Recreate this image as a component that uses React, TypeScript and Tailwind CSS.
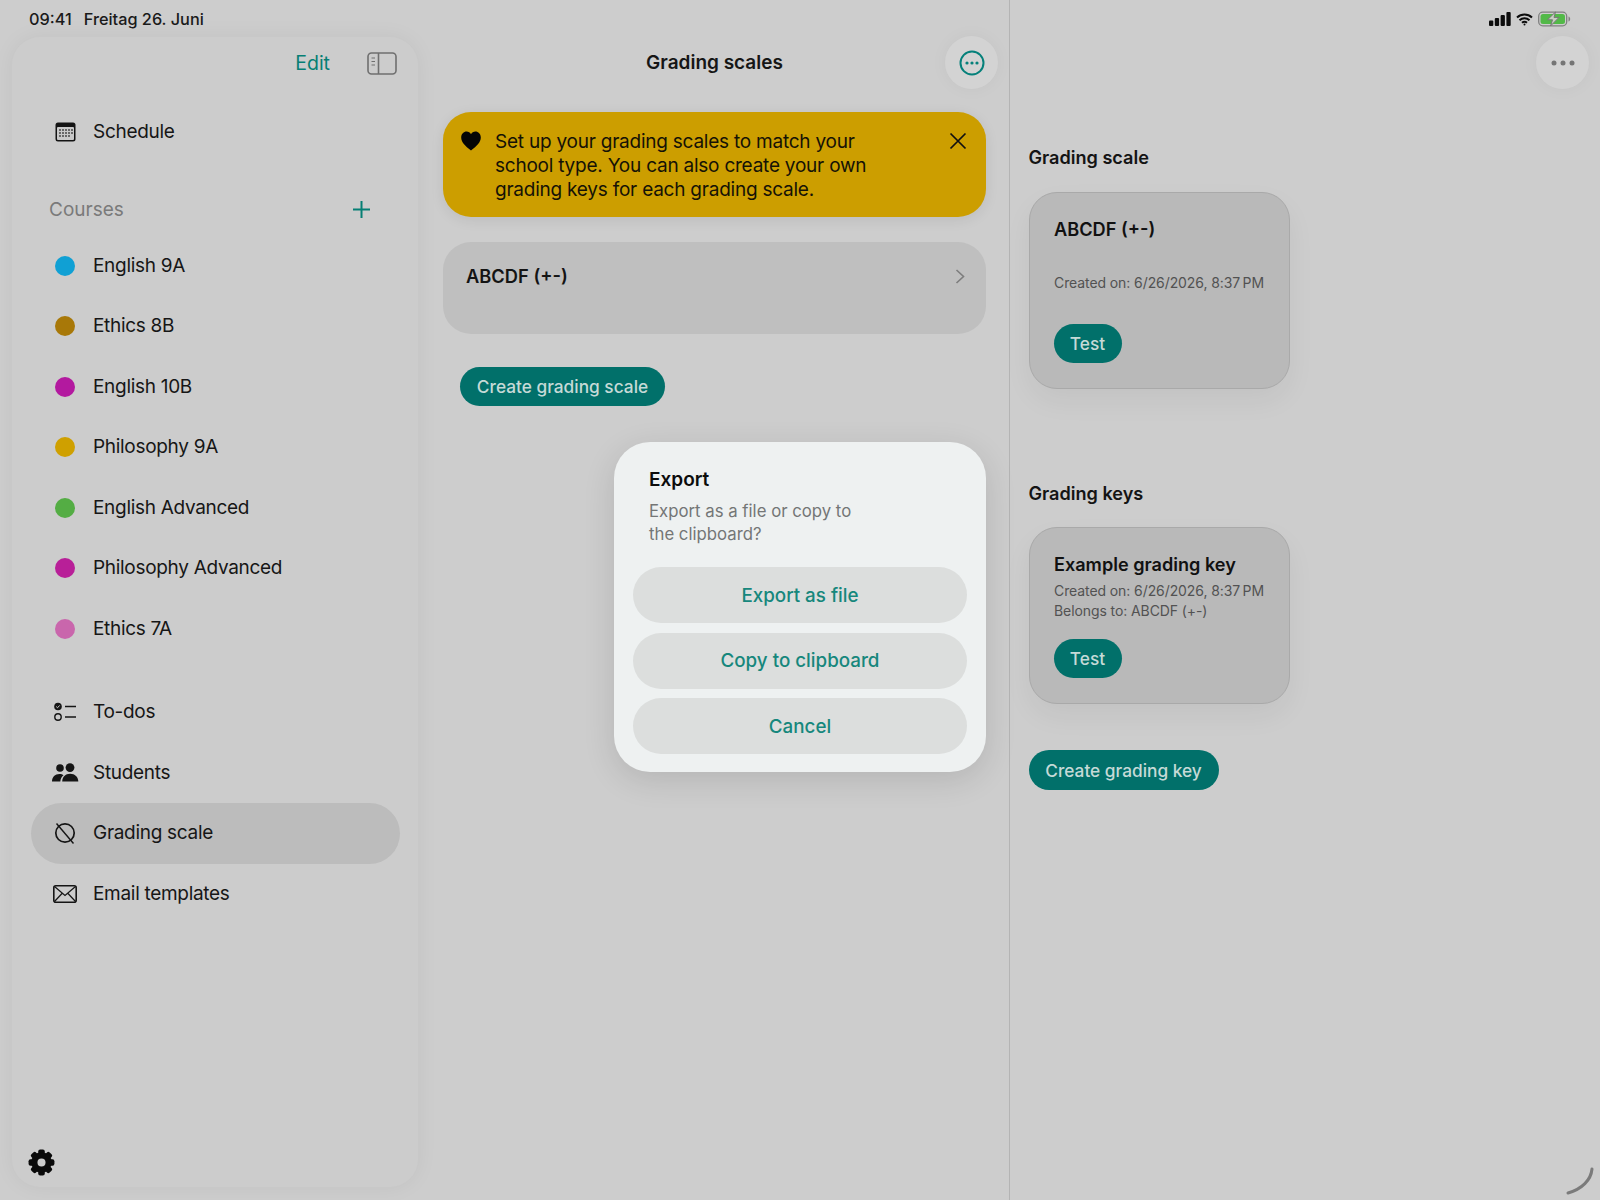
import React from "react";

const font = { fontFamily: '"Inter", "Liberation Sans", sans-serif' };

function CalendarIcon() {
  return (
    <svg width="21" height="20" viewBox="0 0 21 20">
      <rect x="0.5" y="0.5" width="20" height="19" rx="2.5" fill="#141414" />
      <rect x="2" y="5" width="17" height="13" rx="1" fill="#c9c9c9" />
      {[8, 11, 14].map((y) =>
        [5, 8, 11, 14, 17].map((x) => (y === 14 && x === 17 ? null : <rect key={`${x}-${y}`} x={x - 0.8} y={y - 0.8} width="1.6" height="1.6" fill="#333" />))
      )}
    </svg>
  );
}
function TodoIcon() {
  return (
    <svg width="24" height="20" viewBox="0 0 24 20" fill="none">
      <circle cx="5" cy="4.5" r="3.8" fill="#151515" />
      <path d="M3.2 4.5l1.3 1.3 2.2-2.4" stroke="#ccc" strokeWidth="1" />
      <circle cx="5" cy="15" r="3.2" stroke="#151515" strokeWidth="1.4" />
      <path d="M12 4.5h11M12 15h11" stroke="#151515" strokeWidth="1.5" />
    </svg>
  );
}
function StudentsIcon() {
  return (
    <svg width="27" height="19" viewBox="0 0 27 19" fill="#151515">
      <circle cx="8" cy="5" r="3.8" />
      <circle cx="18" cy="4.6" r="4.4" />
      <path d="M0 18.5c0-4.5 3-7.5 7.5-7.5 1.8 0 3 .4 4 1.2-2 1.5-3 3.6-3.2 6.3z" />
      <path d="M10.2 18.5c0-4.6 3.2-7.8 7.9-7.8s8.2 3.2 8.2 7.8z" />
    </svg>
  );
}
function GradingIcon() {
  return (
    <svg width="24" height="24" viewBox="0 0 24 24" fill="none" stroke="#151515" strokeWidth="1.7">
      <circle cx="12" cy="12" r="9.2" />
      <path d="M3.5 2.5l17 20" strokeWidth="1.4" />
    </svg>
  );
}
function MailIcon() {
  return (
    <svg width="24" height="18" viewBox="0 0 24 18" fill="none" stroke="#151515">
      <rect x="0.8" y="0.8" width="22.4" height="16.4" rx="2" strokeWidth="1.6" />
      <path d="M1.5 1.5l10.5 9 10.5-9M1.5 16.5l7.5-8M22.5 16.5l-7.5-8" strokeWidth="1.2" />
    </svg>
  );
}
function Gear() {
  const teeth = [0, 45, 90, 135, 180, 225, 270, 315];
  return (
    <svg width="27" height="27" viewBox="0 0 28 28">
      {teeth.map((a) => (
        <rect key={a} x="10.6" y="0.6" width="6.8" height="8" rx="2" fill="#0a0a0a" transform={`rotate(${a} 14 14)`} />
      ))}
      <circle cx="14" cy="14" r="7.4" fill="none" stroke="#0a0a0a" strokeWidth="6.4" />
    </svg>
  );
}

function NavRow({ icon, label, active }: { icon: React.ReactNode; label: string; active?: boolean }) {
  return (
    <div className={`flex h-[60.5px] w-[369px] items-center gap-[8px] rounded-full pl-[14px] text-[19px] tracking-[-0.3px] text-[#161616] ${active ? "bg-[#bcbcbc]" : ""}`}>
      <div className="flex w-10 items-center justify-center">{icon}</div>
      <span>{label}</span>
    </div>
  );
}

function Dot({ className }: { className: string }) {
  return <div className={`h-5 w-5 rounded-full ${className}`} />;
}

function MoreButton({ children, className }: { children: React.ReactNode; className?: string }) {
  return <div className={`flex h-[53px] w-[53px] items-center justify-center rounded-full bg-[#d3d3d3] shadow-[0_0_18px_rgba(0,0,0,0.04)] ${className ?? ""}`}>{children}</div>;
}

function Pill({ label, className }: { label: string; className?: string }) {
  return <div className={`flex h-[39px] items-center justify-center rounded-full bg-[#01706a] pt-px text-[17.3px] font-medium text-[#c5dad7] ${className ?? ""}`}>{label}</div>;
}

export default function App() {
  const courses: [string, string][] = [
    ["English 9A", "bg-[#10a0d4]"],
    ["Ethics 8B", "bg-[#a87808]"],
    ["English 10B", "bg-[#b3199f]"],
    ["Philosophy 9A", "bg-[#cfa000]"],
    ["English Advanced", "bg-[#54ad44]"],
    ["Philosophy Advanced", "bg-[#b81f98]"],
    ["Ethics 7A", "bg-[#c966ac]"],
  ];
  return (
    <div style={font} className="relative flex h-[1200px] w-[1600px] overflow-hidden bg-[#cdcdcd] text-[#141414]">
      {/* Sidebar */}
      <div className="w-[418px] shrink-0 pb-[13px] pl-3 pt-[37px]">
        <div className="flex h-full flex-col rounded-[28px] bg-[#cccccc] pl-[19px] shadow-[0_0_22px_rgba(0,0,0,0.05)]">
          <div className="flex h-[52px] items-center justify-end gap-[37px] pr-[21px]">
            <span className="pt-px text-[19.5px] text-[#067f74]">Edit</span>
            <svg width="30" height="23" viewBox="0 0 30 23" fill="none">
              <rect x="1" y="1" width="28" height="21" rx="3.5" stroke="#6f6f6f" strokeWidth="1.6" />
              <path d="M11.5 1v21" stroke="#6f6f6f" strokeWidth="1.6" />
              <path d="M4.5 6h3.5M4.5 9.5h3.5M4.5 13h3.5" stroke="#6f6f6f" strokeWidth="1.2" />
            </svg>
          </div>
          <div className="mt-[12.5px]">
            <NavRow icon={<CalendarIcon />} label="Schedule" />
          </div>
          <div className="mt-[33px] flex h-[30px] w-[369px] items-center justify-between pl-[18px] pr-[30.5px]">
            <span className="text-[19px] text-[#7a7a7a]">Courses</span>
            <svg className="mt-[-1px]" width="17" height="17" viewBox="0 0 17 17" stroke="#067f74" strokeWidth="2">
              <path d="M8.5 0v17M0 8.5h17" />
            </svg>
          </div>
          <div className="mt-[10.5px]">
            {courses.map(([name, c]) => (
              <NavRow key={name} label={name} icon={<Dot className={c} />} />
            ))}
          </div>
          <div className="mt-[23px]">
            <NavRow icon={<TodoIcon />} label="To-dos" />
            <NavRow icon={<StudentsIcon />} label="Students" />
            <NavRow icon={<GradingIcon />} label="Grading scale" active />
            <NavRow icon={<MailIcon />} label="Email templates" />
          </div>
          <div className="ml-[-3px] mt-auto pb-[11px]">
            <Gear />
          </div>
        </div>
      </div>

      {/* Middle column */}
      <div className="w-[591px] shrink-0 pl-[25px] pr-[23px] pt-9">
        <div className="grid h-[53px] grid-cols-[1fr_auto_1fr] items-center">
          <div />
          <div className="pt-px text-[19px] font-semibold text-[#161616]">Grading scales</div>
          <div className="flex justify-end">
            <MoreButton className="mr-[-12px]">
              <svg width="26" height="26" viewBox="0 0 26 26" fill="none">
                <circle cx="13" cy="13" r="11.5" stroke="#05807a" strokeWidth="2" />
                <circle cx="8" cy="13" r="1.6" fill="#05807a" />
                <circle cx="13" cy="13" r="1.6" fill="#05807a" />
                <circle cx="18" cy="13" r="1.6" fill="#05807a" />
              </svg>
            </MoreButton>
          </div>
        </div>
        <div className="mt-[23px] flex h-[105px] items-start rounded-[28px] bg-[#cc9e00] pl-[18px] pr-[19px] pt-[17px] shadow-[0_3px_14px_rgba(0,0,0,0.08)]">
          <svg className="mt-[2px] shrink-0" width="20" height="20" viewBox="0 0 20 20" fill="#050505">
            <path d="M10 19.5C4 14.8.2 11.2.2 6.500.2 3 2.700.6 5.600.6 7.500.6 9.100 1.600 10 3.300 10.900 1.600 12.500.6 14.400.6c2.900 0 5.400 2.400 5.400 5.900 0 4.700-3.800 8.300-9.800 13z" />
          </svg>
          <p className="ml-[14px] mt-px w-[400px] text-[19px] leading-[24px] tracking-[-0.23px] text-[#151206]">
            Set up your grading scales to match your school type. You can also create your own grading keys for each grading scale.
          </p>
          <svg className="ml-auto mt-[3px] shrink-0" width="18" height="18" viewBox="0 0 18 18" stroke="#111" strokeWidth="1.7">
            <path d="M1.5 1.5l15 15M16.5 1.5l-15 15" />
          </svg>
        </div>
        <div className="mt-[25px] flex h-[92px] items-start justify-between rounded-[28px] bg-[#bfbfbf] pl-[23px] pr-[21px] pt-[22px]">
          <span className="text-[18.3px] font-semibold leading-[24px] text-[#141414]">ABCDF (+-)</span>
          <svg className="mt-[5px]" width="10" height="15" viewBox="0 0 10 15" fill="none" stroke="#7d7d7d" strokeWidth="1.6">
            <path d="M1.5 1l7 6.5-7 6.5" />
          </svg>
        </div>
        <Pill label="Create grading scale" className="ml-[17px] mt-[33px] w-[205px]" />
      </div>

      {/* Right column */}
      <div className="flex-1 border-l border-[#b4b4b4] pl-[18.5px] pt-9">
        <div className="flex justify-end pr-[11px]">
          <MoreButton>
            <svg width="24" height="6" viewBox="0 0 24 6" fill="#757575">
              <circle cx="3" cy="3" r="2.5" />
              <circle cx="12" cy="3" r="2.5" />
              <circle cx="21" cy="3" r="2.5" />
            </svg>
          </MoreButton>
        </div>
        <h2 className="mt-[56px] text-[18.1px] font-semibold leading-[24px] text-[#141414]">Grading scale</h2>
        <div className="mt-[23px] h-[197px] w-[261px] rounded-[28px] border border-[#a9a9a9] bg-[#b9b9b9] pl-[24.5px] pt-[24px] shadow-[0_12px_28px_rgba(0,0,0,0.05)]">
          <div className="text-[18.2px] font-semibold leading-[24px] text-[#111]">ABCDF (+-)</div>
          <div className="mt-[32px] text-[14px] leading-[20px] tracking-[-0.09px] text-[#525252]">Created on: 6/26/2026, 8:37{"\u202f"}PM</div>
          <Pill label="Test" className="ml-[-0.5px] mt-[30.5px] w-[68px]" />
        </div>
        <h2 className="mt-[92px] text-[18.1px] font-semibold leading-[24px] text-[#141414]">Grading keys</h2>
        <div className="mt-[22px] h-[177px] w-[261px] rounded-[28px] border border-[#a9a9a9] bg-[#b9b9b9] pl-[24.5px] pt-[24px] shadow-[0_12px_28px_rgba(0,0,0,0.05)]">
          <div className="text-[18.1px] font-semibold leading-[24px] text-[#111]">Example grading key</div>
          <div className="mt-[5px] text-[14px] leading-[19.5px] tracking-[-0.09px] text-[#525252]">
            Created on: 6/26/2026, 8:37{"\u202f"}PM
            <br />
            Belongs to: ABCDF (+-)
          </div>
          <Pill label="Test" className="ml-[-0.5px] mt-[19px] w-[68px]" />
        </div>
        <Pill label="Create grading key" className="mt-[46px] h-[40px] w-[190px]" />
      </div>

      {/* Status bar */}
      <div className="absolute left-[29px] top-[8px] flex gap-[12px] text-[16.3px] font-medium leading-[22px] text-[#1a1a1a]">
        <span>09:41</span>
        <span>Freitag 26. Juni</span>
      </div>
      <div className="absolute right-[29px] top-[11px] flex items-center gap-[5px]">
        <svg width="22" height="14" viewBox="0 0 22 14" fill="#0c0c0c">
          <rect x="0" y="8.5" width="4.3" height="5.5" rx="1" />
          <rect x="5.8" y="6" width="4.3" height="8" rx="1" />
          <rect x="11.6" y="3" width="4.3" height="11" rx="1" />
          <rect x="17.4" y="0" width="4.3" height="14" rx="1" />
        </svg>
        <svg width="17" height="13" viewBox="0 0 17 13" fill="none" stroke="#0c0c0c" strokeWidth="2">
          <path d="M1 4.5c4.3-4 10.7-4 15 0M3.5 7.2c2.9-2.7 7.1-2.7 10 0M6 9.8c1.5-1.3 3.5-1.3 5 0" />
          <circle cx="8.5" cy="11.5" r="1" fill="#0c0c0c" stroke="none" />
        </svg>
        <svg width="33" height="16" viewBox="0 0 33 16" fill="none">
          <rect x="0.7" y="1.2" width="28" height="13.6" rx="4" stroke="#808080" strokeWidth="1.3" />
          <rect x="2.5" y="3" width="24.5" height="10" rx="2.5" fill="#52b948" />
          <path d="M30.5 5.5v5c1-.3 1.7-1.3 1.7-2.5s-.7-2.2-1.7-2.500z" fill="#808080" />
          <path d="M17.5 1L9.5 8.8h5l-2 6.2 8.5-8.6h-5z" fill="#c7cfc2" stroke="#777" strokeWidth="1" strokeLinejoin="round" />
        </svg>
      </div>

      {/* Export dialog */}
      <div className="absolute left-[614px] top-[442px] h-[330px] w-[372px] rounded-[36px] bg-[#eef1f1] px-[19px] pt-[26px] shadow-[0_8px_32px_rgba(0,0,0,0.12)]">
        <div className="pl-4 text-[19px] font-semibold leading-[24px] text-[#0c0c0c]">Export</div>
        <div className="mt-[7.5px] w-[240px] pl-4 text-[16.75px] leading-[23px] text-[#747676]">Export as a file or copy to the clipboard?</div>
        <div className="mt-[21.5px] flex flex-col gap-[9.5px]">
          {["Export as file", "Copy to clipboard", "Cancel"].map((t) => (
            <div key={t} className="flex h-[56px] items-center justify-center rounded-full bg-[#dcdedd] pt-[2px] text-[18.8px] font-medium text-[#16877c]">
              {t}
            </div>
          ))}
        </div>
      </div>

      {/* Home corner stroke */}
      <svg className="absolute left-[1565px] top-[1166px]" width="30" height="30" viewBox="0 0 30 30" fill="none">
        <path d="M27 3c-1 11-10 20-24 24" stroke="#7b7b7b" strokeWidth="3" strokeLinecap="round" />
      </svg>
    </div>
  );
}
